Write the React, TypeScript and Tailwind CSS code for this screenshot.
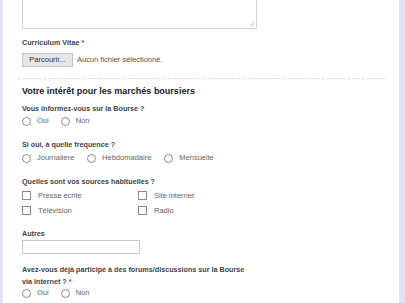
import React from "react";

const Radio = ({ label }: { label: string }) => (
  <span className="flex items-center gap-[6px]">
    <span className="h-[9px] w-[9px] rounded-full border border-[#8a8a8a] bg-white" />
    <span className="text-[#666]">{label}</span>
  </span>
);

const Check = ({ label }: { label: string }) => (
  <span className="flex items-center gap-[7px]">
    <span className="h-[9px] w-[9px] border border-[#8a8a8a] bg-white" />
    <span className="text-[#666]">{label}</span>
  </span>
);

const Label = ({ children }: { children: React.ReactNode }) => (
  <div className="text-[7.2px] font-bold leading-[12px] text-[#444]">{children}</div>
);

export default function App() {
  return (
    <div
      className="flex h-[303px] w-[405px] overflow-hidden bg-[#e2e2f4] pl-[3px] pr-[6px]"
      style={{ fontFamily: '"Liberation Sans", Arial, sans-serif' }}
    >
      <div className="flex-1 bg-white pl-[19px] pr-[14px] text-[7.5px]">
        {/* textarea (top cut off) */}
        <div className="relative -mt-[12px] h-[41px] w-[235px] border border-[#d4d4d4] bg-white">
          <svg className="absolute bottom-[1px] right-[1px]" width="6" height="6" viewBox="0 0 6 6">
            <path d="M5 1L1 5M5 3L3 5" stroke="#b5b5b5" strokeWidth="0.8" />
          </svg>
        </div>

        <div className="mt-[8px]">
          <Label>
            Curriculum Vitae <span className="text-[#d02020]">*</span>
          </Label>
        </div>
        <div className="mt-[4px] flex items-center gap-[4px]">
          <span className="flex h-[14px] w-[51px] items-center justify-center border border-[#c4c4c4] bg-[#e6e6e6] text-[#333]">
            Parcourir...
          </span>
          <span className="text-[#555]">Aucun fichier sélectionné.</span>
        </div>

        <div className="-ml-[4px] mt-[11px] border-t border-dashed border-[#dcdcdc]" />

        <div className="mt-[6px] text-[9px] font-bold leading-[12px] text-[#222]">
          Votre intérêt pour les marchés boursiers
        </div>

        <div className="mt-[6px]">
          <Label>Vous informez-vous sur la Bourse ?</Label>
        </div>
        <div className="-mt-[1px] flex h-[14px] items-center gap-[12px]">
          <Radio label="Oui" />
          <Radio label="Non" />
        </div>

        <div className="mt-[11px]">
          <Label>Si oui, à quelle fréquence ?</Label>
        </div>
        <div className="flex h-[14px] items-center gap-[13px]">
          <Radio label="Journalière" />
          <Radio label="Hebdomadaire" />
          <Radio label="Mensuelle" />
        </div>

        <div className="mt-[11px]">
          <Label>Quelles sont vos sources habituelles ?</Label>
        </div>
        <div className="grid w-[230px] grid-cols-[116px_1fr]">
          <div className="flex h-[15px] items-center"><Check label="Presse écrite" /></div>
          <div className="flex h-[15px] items-center"><Check label="Site internet" /></div>
          <div className="flex h-[15px] items-center"><Check label="Télévision" /></div>
          <div className="flex h-[15px] items-center"><Check label="Radio" /></div>
        </div>

        <div className="mt-[10px]">
          <Label>Autres</Label>
        </div>
        <div className="h-[14px] w-[118px] border border-[#c8c8c8] bg-white" />

        <div className="mt-[10px] w-[228px]">
          <Label>
            Avez-vous déjà participé à des forums/discussions sur la Bourse via Internet ?{" "}
            <span className="text-[#d02020]">*</span>
          </Label>
        </div>
        <div className="-mt-[2px] flex h-[14px] items-center gap-[12px]">
          <Radio label="Oui" />
          <Radio label="Non" />
        </div>
      </div>
    </div>
  );
}
